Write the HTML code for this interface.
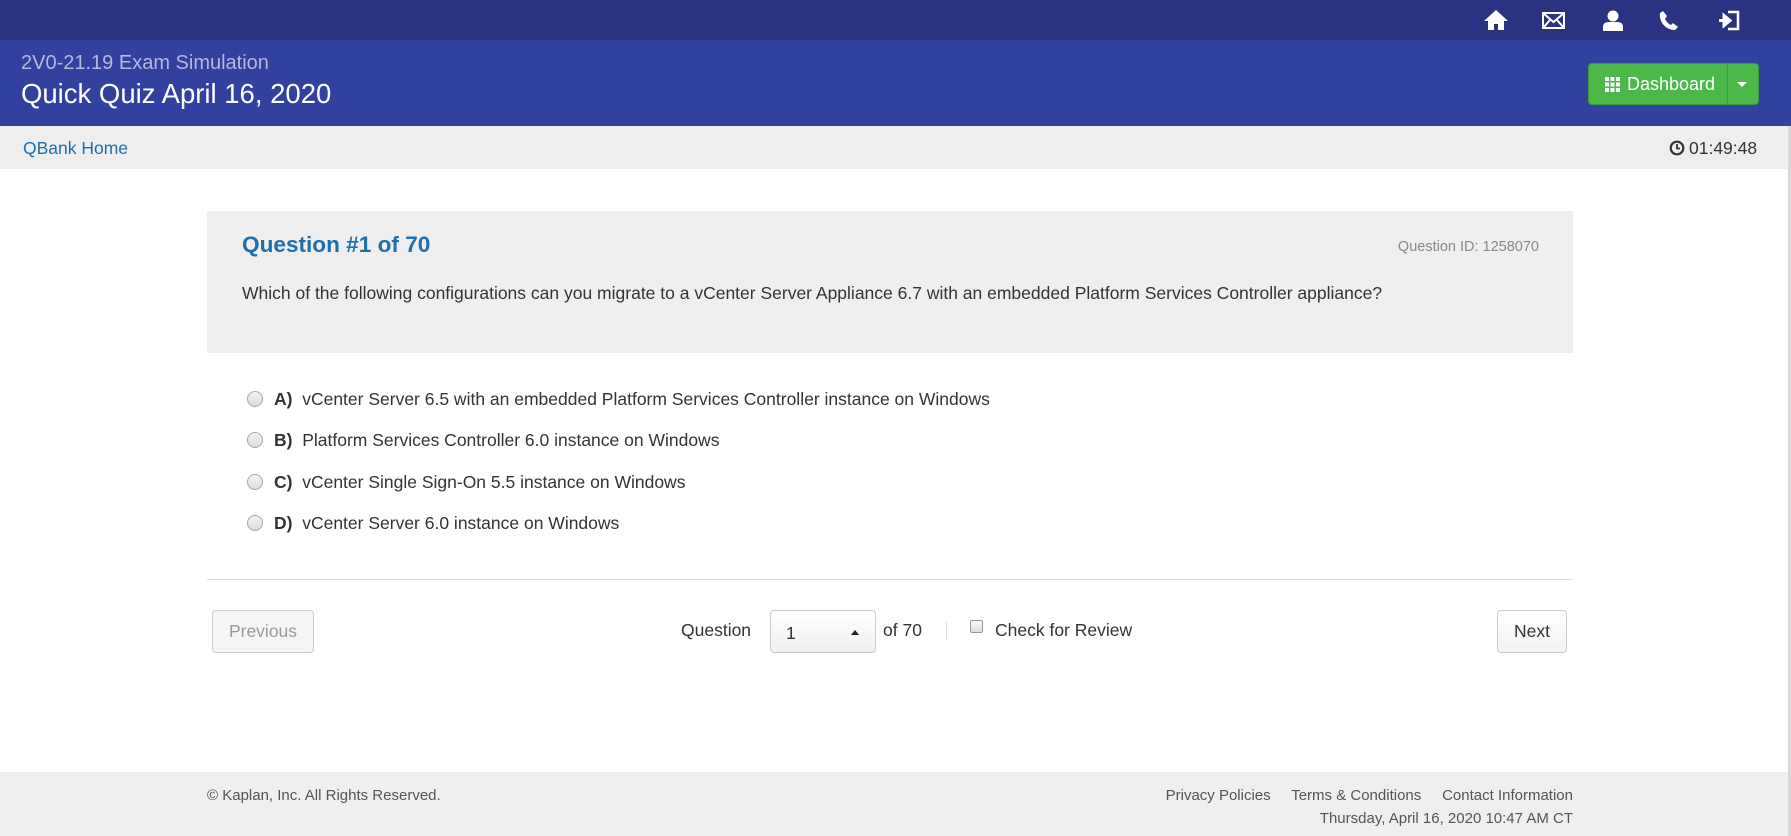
<!DOCTYPE html>
<html><head><meta charset="utf-8"><style>
*{box-sizing:border-box;margin:0;padding:0}
body{width:1791px;height:836px;overflow:hidden;background:#fff;font-family:"Liberation Sans",Arial,sans-serif;color:#333;position:relative}
.abs{position:absolute}
.top{left:0;top:0;width:1791px;height:40px;background:#293382}
.hdr{left:0;top:40px;width:1791px;height:86px;background:#32409f}
.sub{left:0;top:126px;width:1788px;height:43px;background:#eeeeee}
.sb{left:1788px;top:126px;width:3px;height:710px;background:#d8d8d8}
.t1{left:21px;top:52px;font-size:20px;color:#b3b9df}
.t2{left:21px;top:78px;font-size:27.5px;color:#fff}
.dash{left:1588px;top:63px;width:171px;height:42px;background:#4cb84a;border:1px solid #3d9f3b;border-radius:4px;color:#fff;font-size:18px}
.panel{left:207px;top:211px;width:1366px;height:142px;background:#efefef}
.radio{width:16px;height:16px;border-radius:50%;border:1px solid #a8a8a8;background:linear-gradient(#f4f4f4,#dcdcdc)}
.opt{font-size:17.5px;color:#333}
.btn{border:1px solid #ccc;border-radius:4px;background:#f5f5f5;font-size:17.5px;text-align:center}
.foot{left:0;top:772px;width:1788px;height:64px;background:#efefef}
.ft{font-size:15px;color:#555}
</style></head><body>
<div class="abs top"></div>
<svg class="abs" style="left:1483px;top:9px" width="26" height="22" viewBox="0 0 26 22"><path d="M13 1 L25 12 H21 V21 H15 V15 H11 V21 H5 V12 H1 Z" fill="#fff"/></svg>
<svg class="abs" style="left:1542px;top:12px" width="23" height="17" viewBox="0 0 23 17"><rect x="1" y="1" width="21" height="15" fill="none" stroke="#fff" stroke-width="2"/><path d="M1 1 L11.5 10 L22 1 M1 16 L8 8 M22 16 L15 8" fill="none" stroke="#fff" stroke-width="2"/></svg>
<svg class="abs" style="left:1603px;top:10px" width="20" height="21" viewBox="0 0 20 21"><circle cx="10" cy="6" r="5.5" fill="#fff"/><path d="M0 21 V17 Q0 12 6 12 H14 Q20 12 20 17 V21 Z" fill="#fff"/></svg>
<svg class="abs" style="left:1659px;top:10px" width="20" height="21" viewBox="0 0 20 21"><path d="M4 1 L8 6 L6 9 Q8 13 12 15 L14 13 L19 17 L16 20 Q8 20 3 13 Q0 7 1 3 Z" fill="#fff"/></svg>
<svg class="abs" style="left:1718px;top:10px" width="22" height="21" viewBox="0 0 22 21"><path d="M10 2 H20 V19 H10" fill="none" stroke="#fff" stroke-width="2.5"/><path d="M1 10.5 H9 M6 5.5 L12 10.5 L6 15.5 Z" stroke="#fff" stroke-width="3" fill="#fff"/></svg>
<div class="abs hdr"></div>
<div class="abs t1">2V0-21.19 Exam Simulation</div>
<div class="abs t2">Quick Quiz April 16, 2020</div>
<div class="abs dash">
 <svg class="abs" style="left:16px;top:13px" width="15" height="15" viewBox="0 0 15 15" fill="#fff"><rect x="0" y="0" width="4" height="4"/><rect x="5.5" y="0" width="4" height="4"/><rect x="11" y="0" width="4" height="4"/><rect x="0" y="5.5" width="4" height="4"/><rect x="5.5" y="5.5" width="4" height="4"/><rect x="11" y="5.5" width="4" height="4"/><rect x="0" y="11" width="4" height="4"/><rect x="5.5" y="11" width="4" height="4"/><rect x="11" y="11" width="4" height="4"/></svg>
 <span class="abs" style="left:38px;top:10px">Dashboard</span>
 <div class="abs" style="left:138px;top:0;width:1px;height:40px;background:#3f9f3d"></div>
 <div class="abs" style="left:148px;top:18px;width:0;height:0;border-left:5px solid transparent;border-right:5px solid transparent;border-top:5px solid #fff"></div>
</div>
<div class="abs sub"></div>
<div class="abs sb"></div>
<div class="abs" style="left:23px;top:138px;font-size:17.5px;color:#1d6fad">QBank Home</div>
<svg class="abs" style="left:1669px;top:140px" width="16" height="16" viewBox="0 0 16 16"><circle cx="8" cy="8" r="6.3" fill="none" stroke="#333" stroke-width="2.2"/><path d="M8 4 V8.5 H11" fill="none" stroke="#333" stroke-width="1.8"/></svg>
<div class="abs" style="left:1689px;top:138px;font-size:17.5px;color:#333">01:49:48</div>

<div class="abs panel"></div>
<div class="abs" style="left:242px;top:232px;font-size:22.6px;font-weight:bold;color:#1d6fad">Question #1 of 70</div>
<div class="abs" style="left:1389px;top:239px;width:150px;text-align:right;font-size:14.5px;color:#888">Question ID: 1258070</div>
<div class="abs" style="left:242px;top:283px;font-size:17.5px;color:#333">Which of the following configurations can you migrate to a vCenter Server Appliance 6.7 with an embedded Platform Services Controller appliance?</div>

<div class="abs radio" style="left:247px;top:391px"></div><div class="abs opt" style="left:274px;top:389px"><b>A)</b>&nbsp; vCenter Server 6.5 with an embedded Platform Services Controller instance on Windows</div>
<div class="abs radio" style="left:247px;top:432px"></div><div class="abs opt" style="left:274px;top:430px"><b>B)</b>&nbsp; Platform Services Controller 6.0 instance on Windows</div>
<div class="abs radio" style="left:247px;top:474px"></div><div class="abs opt" style="left:274px;top:472px"><b>C)</b>&nbsp; vCenter Single Sign-On 5.5 instance on Windows</div>
<div class="abs radio" style="left:247px;top:515px"></div><div class="abs opt" style="left:274px;top:513px"><b>D)</b>&nbsp; vCenter Server 6.0 instance on Windows</div>

<div class="abs" style="left:207px;top:579px;width:1366px;height:1px;background:#ddd"></div>
<div class="abs btn" style="left:212px;top:610px;width:102px;height:43px;line-height:41px;color:#999">Previous</div>
<div class="abs" style="left:681px;top:620px;font-size:17.5px">Question</div>
<div class="abs btn" style="left:770px;top:610px;width:106px;height:43px;background:linear-gradient(#fff,#f0f0f0)"><span class="abs" style="left:15px;top:12px">1</span><div class="abs" style="left:80px;top:19px;border-left:4px solid transparent;border-right:4px solid transparent;border-bottom:5px solid #222"></div></div>
<div class="abs" style="left:883px;top:620px;font-size:17.5px">of 70</div>
<div class="abs" style="left:946px;top:622px;width:1px;height:18px;background:#ddd"></div>
<div class="abs" style="left:970px;top:620px;width:13px;height:13px;border:1px solid #999;border-radius:2px;background:linear-gradient(#fafafa,#ddd)"></div>
<div class="abs" style="left:995px;top:620px;font-size:17.5px">Check for Review</div>
<div class="abs btn" style="left:1497px;top:610px;width:70px;height:43px;line-height:41px;background:linear-gradient(#fff,#f3f3f3);color:#333">Next</div>

<div class="abs foot"></div>
<div class="abs ft" style="left:207px;top:787px">© Kaplan, Inc. All Rights Reserved.</div>
<div class="abs ft" style="left:1000px;top:787px;width:573px;text-align:right">Privacy Policies &nbsp;&nbsp;&nbsp; Terms &amp; Conditions &nbsp;&nbsp;&nbsp; Contact Information</div>
<div class="abs ft" style="left:1000px;top:810px;width:573px;text-align:right">Thursday, April 16, 2020 10:47 AM CT</div>
</body></html>
